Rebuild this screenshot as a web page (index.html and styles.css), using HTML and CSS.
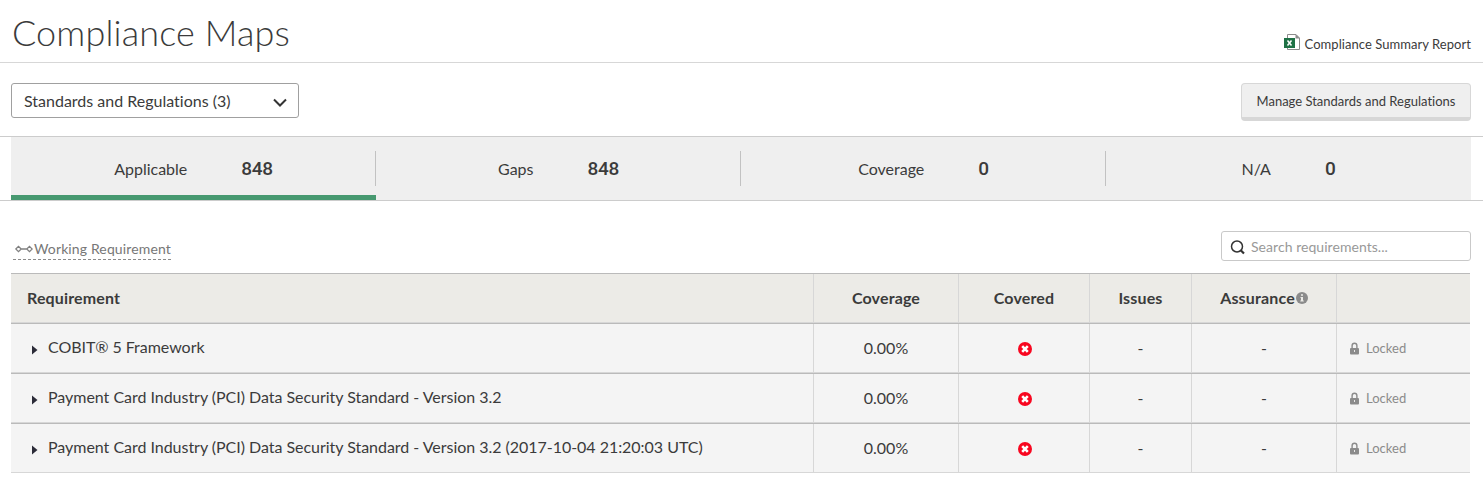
FILE: index.html
```html
<!DOCTYPE html>
<html lang="en">
<head>
<meta charset="utf-8">
<title>Compliance Maps</title>
<link rel="stylesheet" href="styles.css">
</head>
<body>
<svg class="defs" width="0" height="0">
  <symbol id="cross" viewBox="0 0 14 14"><circle cx="7" cy="7" r="7" fill="#f8061f"/><path d="M4.200 4.200l5.600 5.600M9.800 4.200L4.200 9.800" stroke="#fff" stroke-width="2.600"/></symbol>
  <symbol id="lock" viewBox="0 0 9 13"><path d="M2.1 6.5V3.8a2.4 2.6 0 0 1 4.8 0v2.7" fill="none" stroke="#8b8b8b" stroke-width="1.4"/><rect x="0" y="6" width="9" height="6.5" rx="1" fill="#8b8b8b"/><rect x="4" y="8" width="1" height="2" fill="#e8e8e8"/></symbol>
  <symbol id="caret" viewBox="0 0 6 10"><path d="M0 0.5L5.5 5L0 9.5z" fill="#2b2b38"/></symbol>
</svg>
<header class="head">
  <h1 class="title">Compliance Maps</h1>
  <a class="report">
    <svg width="16" height="16" viewBox="0 0 16 16"><path d="M3.500 4V.5h8.500l3.500 3.500v11.500H3.500V12" fill="#fff" stroke="#8c8c8c"/><path d="M11.500 0v4.500H16z" fill="#8c8c8c"/><rect x="0" y="4" width="11" height="10" fill="#1e7145"/><path d="M3.500 6.500l4 5M7.500 6.500l-4 5" stroke="#fff" stroke-width="1.500"/></svg>
    <span>Compliance Summary Report</span>
  </a>
</header>
<div class="filters">
  <div class="select"><span>Standards and Regulations (3)</span>
    <svg width="14" height="10" viewBox="0 0 14 10"><path d="M1 1.500l6 6 6-6" fill="none" stroke="#333" stroke-width="2"/></svg>
  </div>
  <button class="manage">Manage Standards and Regulations</button>
</div>
<nav class="tabs">
  <div class="tab active"><span>Applicable</span><b>848</b></div>
  <div class="tab"><span>Gaps</span><b>848</b></div>
  <div class="tab"><span>Coverage</span><b>0</b></div>
  <div class="tab"><span>N/A</span><b>0</b></div>
</nav>
<div class="tools">
  <a class="working"><svg width="18" height="8" viewBox="0 0 18 8"><g fill="none" stroke="#808080" stroke-width="1.300"><path d="M.8 4l2.700-2.700L6.200 4 3.500 6.700zM11.800 4l2.700-2.700L17.200 4l-2.700 2.700zM6 4h6"/></g></svg>Working Requirement</a>
  <div class="search"><svg width="16" height="16" viewBox="0 0 16 16"><circle cx="7" cy="7.500" r="5.500" fill="none" stroke="#333" stroke-width="1.500"/><path d="M10.500 11l3.500 3.500" stroke="#333" stroke-width="2.200"/></svg><span>Search requirements...</span></div>
</div>
<main class="grid">
  <div class="row heading">
    <div class="name">Requirement</div><div>Coverage</div><div>Covered</div><div>Issues</div>
    <div>Assurance<svg class="info" width="12" height="12" viewBox="0 0 12 12"><circle cx="6" cy="6" r="6" fill="#8b8b8b"/><path d="M5 2.200h2v1.600H5zM4.500 5H7v3.500h.8v1H4.300v-1H5V6h-.5z" fill="#ecebe7"/></svg></div><div></div>
  </div>
  <div class="row">
    <div class="name"><svg class="caret" width="6" height="10"><use href="#caret"/></svg>COBIT® 5 Framework</div><div>0.00%</div><div><svg class="cross" width="14" height="14"><use href="#cross"/></svg></div><div>-</div><div>-</div><div class="locked"><svg width="9" height="13"><use href="#lock"/></svg>Locked</div>
  </div>
  <div class="row">
    <div class="name"><svg class="caret" width="6" height="10"><use href="#caret"/></svg>Payment Card Industry (PCI) Data Security Standard - Version 3.2</div><div>0.00%</div><div><svg class="cross" width="14" height="14"><use href="#cross"/></svg></div><div>-</div><div>-</div><div class="locked"><svg width="9" height="13"><use href="#lock"/></svg>Locked</div>
  </div>
  <div class="row">
    <div class="name"><svg class="caret" width="6" height="10"><use href="#caret"/></svg>Payment Card Industry (PCI) Data Security Standard - Version 3.2 (2017-10-04 21:20:03 UTC)</div><div>0.00%</div><div><svg class="cross" width="14" height="14"><use href="#cross"/></svg></div><div>-</div><div>-</div><div class="locked"><svg width="9" height="13"><use href="#lock"/></svg>Locked</div>
  </div>
</main>
</body>
</html>
```
FILE: styles.css
```css
* { box-sizing: border-box; }
body { margin: 0; background: #fff; color: #3b3b3b; font: 16px/20px Lato, sans-serif; font-variant-ligatures: none; }
svg { flex: none; display: block; }
.defs { position: absolute; }
.head { height: 63px; padding: 0 12px; border-bottom: 1px solid #d7d7d7; display: flex; justify-content: space-between; }
.title { margin: 10px 0 0; font-size: 36px; line-height: 44px; font-weight: 300; letter-spacing: .13px; }
.report { display: flex; gap: 5px; margin-top: 34px; font-size: 13px; letter-spacing: .05px; }
.filters { height: 73px; padding: 20px 12px 0 11px; display: flex; justify-content: space-between; align-items: flex-start; }
.select { width: 288px; height: 35px; border: 1px solid #a0a0a0; border-radius: 3px; padding: 0 11px 0 12px; display: flex; align-items: center; justify-content: space-between; }
.select svg { margin-top: 5px; }
.manage { width: 230px; height: 38px; border: 1px solid #d7d7d7; border-bottom-width: 4px; border-radius: 4px; background: #efefef; color: #3b3b3b; font: 13px/20px Lato, sans-serif; font-variant-ligatures: none; padding: 1px 0 0; white-space: nowrap; }
.tabs { height: 65px; padding: 0 12px 0 11px; border: solid #ccc; border-width: 1px 0; display: grid; grid-template-columns: repeat(4, 365px); }
.tab { background: linear-gradient(#c2c2c2, #c2c2c2) right 14px / 1px 35px no-repeat #efefef; display: flex; justify-content: center; align-items: center; gap: 54px; padding-top: 1px; }
.tab:last-child { background: #efefef; }
.tab.active { border-bottom: 5px solid #479970; padding-top: 6px; }
.tab b { font: 500 19px/20px Roboto, sans-serif; letter-spacing: -.3px; }
.tools { height: 72px; padding: 30px 12px 0 13px; display: flex; justify-content: space-between; align-items: flex-start; }
.working { display: flex; align-items: center; gap: 1px; margin-top: 8px; height: 21px; padding-left: 2px; border-bottom: 1px dashed #8b8b8b; color: #777; font-size: 14px; letter-spacing: .13px; }
.search { width: 250px; height: 30px; border: 1px solid #c9c9c9; border-radius: 3px; display: flex; align-items: center; gap: 5px; padding: 2px 8px 0; color: #999; font-size: 14px; letter-spacing: .05px; }
.grid { width: 1459px; margin-left: 11px; border-top: 1px solid #bababa; }
.row { display: grid; grid-template-columns: 802px 145px 131px 102px 145px 134px; height: 50px; background: #f4f4f4; border-bottom: 1px solid #bababa; }
.row:last-child { height: 49px; border-bottom: 0; }
.row > div { display: flex; align-items: center; justify-content: center; border-left: 1px solid #d7d7d7; border-bottom: 1px solid #d7d7d7; }
.row > .name { justify-content: flex-start; padding-left: 21px; border-left: 0; padding-bottom: 2px; letter-spacing: -.03px; }
.heading { background: #ecebe7; font-weight: 700; }
.row.heading > div { letter-spacing: .15px; }
.row.heading > .name { padding-left: 16px; padding-bottom: 0; letter-spacing: .15px; }
.info { margin: 0 0 0 1px; }
.caret { margin: 5px 10px 0 0; }
.cross { margin: 2px 0 0 1px; }
.row > .locked { justify-content: flex-start; gap: 7px; padding-left: 13px; color: #8b8b8b; font-size: 13px; }
```
